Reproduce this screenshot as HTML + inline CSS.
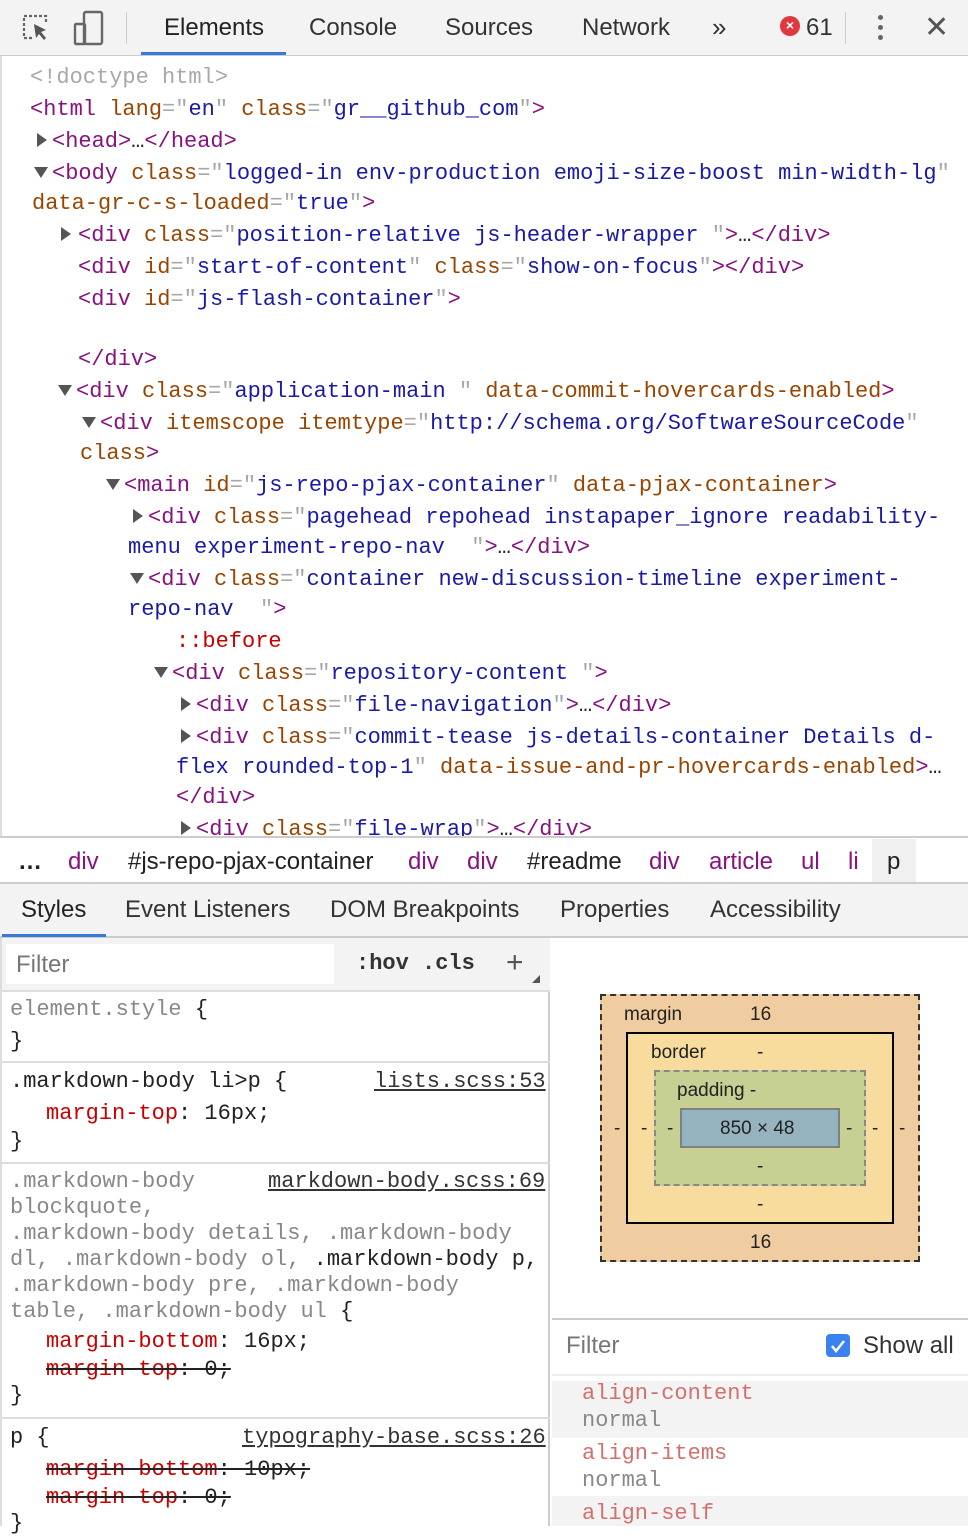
<!DOCTYPE html>
<html><head><meta charset="utf-8"><style>
*{margin:0;padding:0;box-sizing:border-box}
body{width:968px;height:1526px;background:#fff;position:relative;overflow:hidden;font-family:"Liberation Sans",sans-serif}
.m{font-family:"Liberation Mono",monospace;font-size:22px;white-space:pre;position:absolute;line-height:30px}
.t{color:#881280}.a{color:#994500}.v{color:#1a1aa6}.g{color:#a8a8a8}.k{color:#222}
.tri{position:absolute;width:0;height:0}
.r{border-top:7px solid transparent;border-bottom:7px solid transparent;border-left:10px solid #555}
.d{border-left:7px solid transparent;border-right:7px solid transparent;border-top:11px solid #555}
.s{position:absolute;white-space:pre;font-size:24px;color:#333}
.p{color:#c80000}.st{text-decoration:line-through;color:#222}.st .p{color:#c80000}
.gr{color:#888}.u{text-decoration:underline;color:#333}
.bx{font-size:19px!important;color:#222!important}
</style></head><body>
<!-- toolbar -->
<div style="position:absolute;left:0;top:0;width:968px;height:56px;background:#f3f3f3;border-bottom:1px solid #ccc"></div>
<svg style="position:absolute;left:20px;top:12px" width="32" height="32" viewBox="0 0 32 32"><path d="M12 26H4V4h22v8" fill="none" stroke="#666" stroke-width="2.2" stroke-dasharray="3 2"/><path d="M14 12l12 6-5 2 5 6-2 2-5-6-3 4z" fill="#555"/></svg>
<svg style="position:absolute;left:72px;top:10px" width="34" height="36" viewBox="0 0 34 36"><rect x="12" y="2" width="18" height="32" rx="2" fill="none" stroke="#666" stroke-width="2.4"/><rect x="3" y="14" width="10" height="20" rx="1" fill="none" stroke="#666" stroke-width="2.4"/></svg>
<div style="position:absolute;left:126px;top:12px;width:1px;height:32px;background:#ccc"></div>
<div class="s" style="left:164px;top:14px;color:#222">Elements</div>
<div style="position:absolute;left:141px;top:52px;width:145px;height:3px;background:#3879d9"></div>
<div class="s" style="left:309px;top:14px">Console</div>
<div class="s" style="left:445px;top:14px">Sources</div>
<div class="s" style="left:582px;top:14px">Network</div>
<div class="s" style="left:712px;top:12px;font-size:26px">»</div>
<div style="position:absolute;left:780px;top:16px;width:20px;height:20px;border-radius:50%;background:#e0383e;color:#fff;font-size:14px;text-align:center;line-height:19px;font-weight:bold">×</div>
<div class="s" style="left:806px;top:14px">61</div>
<div style="position:absolute;left:845px;top:12px;width:1px;height:32px;background:#ccc"></div>
<div style="position:absolute;left:878px;top:15px;width:5px;height:5px;border-radius:50%;background:#666;box-shadow:0 10px 0 #666,0 20px 0 #666"></div>
<div class="s" style="left:924px;top:10px;font-size:30px;color:#555">✕</div>
<div style="position:absolute;left:0;top:56px;width:2px;height:780px;background:#ddd"></div>

<!-- DOM tree -->
<div class="m g" style="left:30px;top:63px">&lt;!doctype html&gt;</div>
<div class="m" style="left:30px;top:95px"><span class="t">&lt;html</span> <span class="a">lang</span><span class="g">="</span><span class="v">en</span><span class="g">"</span> <span class="a">class</span><span class="g">="</span><span class="v">gr__github_com</span><span class="g">"</span><span class="t">&gt;</span></div>
<div class="tri r" style="left:37px;top:133px"></div>
<div class="m" style="left:52px;top:127px"><span class="t">&lt;head&gt;</span><span class="k">…</span><span class="t">&lt;/head&gt;</span></div>
<div class="tri d" style="left:34px;top:167px"></div>
<div class="m" style="left:52px;top:159px"><span class="t">&lt;body</span> <span class="a">class</span><span class="g">="</span><span class="v">logged-in env-production emoji-size-boost min-width-lg</span><span class="g">"</span></div>
<div class="m" style="left:32px;top:189px"><span class="a">data-gr-c-s-loaded</span><span class="g">="</span><span class="v">true</span><span class="g">"</span><span class="t">&gt;</span></div>
<div class="tri r" style="left:61px;top:227px"></div>
<div class="m" style="left:78px;top:221px"><span class="t">&lt;div</span> <span class="a">class</span><span class="g">="</span><span class="v">position-relative js-header-wrapper </span><span class="g">"</span><span class="t">&gt;</span><span class="k">…</span><span class="t">&lt;/div&gt;</span></div>
<div class="m" style="left:78px;top:253px"><span class="t">&lt;div</span> <span class="a">id</span><span class="g">="</span><span class="v">start-of-content</span><span class="g">"</span> <span class="a">class</span><span class="g">="</span><span class="v">show-on-focus</span><span class="g">"</span><span class="t">&gt;&lt;/div&gt;</span></div>
<div class="m" style="left:78px;top:285px"><span class="t">&lt;div</span> <span class="a">id</span><span class="g">="</span><span class="v">js-flash-container</span><span class="g">"</span><span class="t">&gt;</span></div>
<div class="m" style="left:78px;top:345px"><span class="t">&lt;/div&gt;</span></div>
<div class="tri d" style="left:58px;top:385px"></div>
<div class="m" style="left:76px;top:377px"><span class="t">&lt;div</span> <span class="a">class</span><span class="g">="</span><span class="v">application-main </span><span class="g">"</span> <span class="a">data-commit-hovercards-enabled</span><span class="t">&gt;</span></div>
<div class="tri d" style="left:82px;top:417px"></div>
<div class="m" style="left:100px;top:409px"><span class="t">&lt;div</span> <span class="a">itemscope</span> <span class="a">itemtype</span><span class="g">="</span><span class="v">http://schema.org/SoftwareSourceCode</span><span class="g">"</span></div>
<div class="m" style="left:80px;top:439px"><span class="a">class</span><span class="t">&gt;</span></div>
<div class="tri d" style="left:106px;top:479px"></div>
<div class="m" style="left:124px;top:471px"><span class="t">&lt;main</span> <span class="a">id</span><span class="g">="</span><span class="v">js-repo-pjax-container</span><span class="g">"</span> <span class="a">data-pjax-container</span><span class="t">&gt;</span></div>
<div class="tri r" style="left:133px;top:509px"></div>
<div class="m" style="left:148px;top:503px"><span class="t">&lt;div</span> <span class="a">class</span><span class="g">="</span><span class="v">pagehead repohead instapaper_ignore readability-</span></div>
<div class="m" style="left:128px;top:533px"><span class="v">menu experiment-repo-nav  </span><span class="g">"</span><span class="t">&gt;</span><span class="k">…</span><span class="t">&lt;/div&gt;</span></div>
<div class="tri d" style="left:130px;top:573px"></div>
<div class="m" style="left:148px;top:565px"><span class="t">&lt;div</span> <span class="a">class</span><span class="g">="</span><span class="v">container new-discussion-timeline experiment-</span></div>
<div class="m" style="left:128px;top:595px"><span class="v">repo-nav  </span><span class="g">"</span><span class="t">&gt;</span></div>
<div class="m" style="left:176px;top:627px;color:#c80000">::before</div>
<div class="tri d" style="left:154px;top:667px"></div>
<div class="m" style="left:172px;top:659px"><span class="t">&lt;div</span> <span class="a">class</span><span class="g">="</span><span class="v">repository-content </span><span class="g">"</span><span class="t">&gt;</span></div>
<div class="tri r" style="left:181px;top:697px"></div>
<div class="m" style="left:196px;top:691px"><span class="t">&lt;div</span> <span class="a">class</span><span class="g">="</span><span class="v">file-navigation</span><span class="g">"</span><span class="t">&gt;</span><span class="k">…</span><span class="t">&lt;/div&gt;</span></div>
<div class="tri r" style="left:181px;top:729px"></div>
<div class="m" style="left:196px;top:723px"><span class="t">&lt;div</span> <span class="a">class</span><span class="g">="</span><span class="v">commit-tease js-details-container Details d-</span></div>
<div class="m" style="left:176px;top:753px"><span class="v">flex rounded-top-1</span><span class="g">"</span> <span class="a">data-issue-and-pr-hovercards-enabled</span><span class="t">&gt;</span><span class="k">…</span></div>
<div class="m" style="left:176px;top:783px"><span class="t">&lt;/div&gt;</span></div>
<div class="tri r" style="left:181px;top:821px"></div>
<div class="m" style="left:196px;top:815px"><span class="t">&lt;div</span> <span class="a">class</span><span class="g">="</span><span class="v">file-wrap</span><span class="g">"</span><span class="t">&gt;</span><span class="k">…</span><span class="t">&lt;/div&gt;</span></div>

<!-- breadcrumb -->
<div style="position:absolute;left:0;top:836px;width:968px;height:48px;background:#fff;border-top:2px solid #ccc;border-bottom:2px solid #ccc"></div>
<div style="position:absolute;left:872px;top:839px;width:44px;height:43px;background:#f0f0f0"></div>
<div class="s" style="left:18px;top:848px;color:#222;font-weight:bold">…</div>
<div class="s" style="left:68px;top:848px;color:#881280">div</div>
<div class="s" style="left:128px;top:848px;color:#222">#js-repo-pjax-container</div>
<div class="s" style="left:408px;top:848px;color:#881280">div</div>
<div class="s" style="left:467px;top:848px;color:#881280">div</div>
<div class="s" style="left:527px;top:848px;color:#222">#readme</div>
<div class="s" style="left:649px;top:848px;color:#881280">div</div>
<div class="s" style="left:709px;top:848px;color:#881280">article</div>
<div class="s" style="left:801px;top:848px;color:#881280">ul</div>
<div class="s" style="left:848px;top:848px;color:#881280">li</div>
<div class="s" style="left:887px;top:848px;color:#222">p</div>

<!-- tabs -->
<div style="position:absolute;left:0;top:884px;width:968px;height:54px;background:#f3f3f3;border-bottom:2px solid #ccc"></div>
<div class="s" style="left:21px;top:896px;color:#222">Styles</div>
<div style="position:absolute;left:2px;top:934px;width:104px;height:3px;background:#3879d9"></div>
<div class="s" style="left:125px;top:896px">Event Listeners</div>
<div class="s" style="left:330px;top:896px">DOM Breakpoints</div>
<div class="s" style="left:560px;top:896px">Properties</div>
<div class="s" style="left:710px;top:896px">Accessibility</div>

<!-- left styles pane -->
<div style="position:absolute;left:0;top:938px;width:550px;height:588px;border-left:2px solid #ddd;border-right:2px solid #ccc"></div>
<div style="position:absolute;left:2px;top:938px;width:548px;height:54px;background:#f3f3f3;border-bottom:2px solid #ddd"></div>
<div style="position:absolute;left:6px;top:944px;width:328px;height:40px;background:#fff"></div>
<div class="s" style="left:16px;top:951px;color:#777">Filter</div>
<div class="m" style="left:356px;top:949px;color:#333;font-weight:bold">:hov .cls</div>
<div class="s" style="left:506px;top:946px;font-size:30px;color:#555">+</div>
<div class="tri" style="left:532px;top:975px;border-left:8px solid transparent;border-bottom:8px solid #555"></div>

<div class="m gr" style="left:10px;top:995px">element.style <span class="k">{</span></div>
<div class="m k" style="left:10px;top:1027px">}</div>
<div style="position:absolute;left:2px;top:1061px;width:548px;height:2px;background:#ddd"></div>
<div class="m k" style="left:10px;top:1067px">.markdown-body li&gt;p {</div>
<div class="m u" style="left:374px;top:1067px">lists.scss:53</div>
<div class="m" style="left:46px;top:1099px"><span class="p">margin-top</span><span class="k">: 16px;</span></div>
<div class="m k" style="left:10px;top:1127px">}</div>
<div style="position:absolute;left:2px;top:1162px;width:548px;height:2px;background:#ddd"></div>
<div class="m gr" style="left:10px;top:1167px">.markdown-body</div>
<div class="m u" style="left:268px;top:1167px">markdown-body.scss:69</div>
<div class="m gr" style="left:10px;top:1193px">blockquote,</div>
<div class="m gr" style="left:10px;top:1219px">.markdown-body details, .markdown-body</div>
<div class="m gr" style="left:10px;top:1245px">dl, .markdown-body ol, <span class="k">.markdown-body p,</span></div>
<div class="m gr" style="left:10px;top:1271px">.markdown-body pre, .markdown-body</div>
<div class="m gr" style="left:10px;top:1297px">table, .markdown-body ul <span class="k">{</span></div>
<div class="m" style="left:46px;top:1327px"><span class="p">margin-bottom</span><span class="k">: 16px;</span></div>
<div class="m st" style="left:46px;top:1355px"><span class="p">margin-top</span>: 0;</div>
<div class="m k" style="left:10px;top:1381px">}</div>
<div style="position:absolute;left:2px;top:1417px;width:548px;height:2px;background:#ddd"></div>
<div class="m k" style="left:10px;top:1423px">p {</div>
<div class="m u" style="left:242px;top:1423px">typography-base.scss:26</div>
<div class="m st" style="left:46px;top:1455px"><span class="p">margin-bottom</span>: 10px;</div>
<div class="m st" style="left:46px;top:1483px"><span class="p">margin-top</span>: 0;</div>
<div class="m k" style="left:10px;top:1509px">}</div>

<!-- box model -->
<div style="position:absolute;left:600px;top:994px;width:320px;height:268px;background:#f0cda0;border:2px dashed #333"></div>
<div class="s bx" style="left:624px;top:1004px">margin</div>
<div class="s bx" style="left:750px;top:1004px">16</div>
<div class="s bx" style="left:750px;top:1232px">16</div>
<div class="s bx" style="left:614px;top:1118px">-</div>
<div class="s bx" style="left:899px;top:1118px">-</div>
<div style="position:absolute;left:626px;top:1032px;width:268px;height:192px;background:#f7dc9e;border:2px solid #000"></div>
<div class="s bx" style="left:651px;top:1042px">border</div>
<div class="s bx" style="left:757px;top:1042px">-</div>
<div class="s bx" style="left:757px;top:1194px">-</div>
<div class="s bx" style="left:641px;top:1118px">-</div>
<div class="s bx" style="left:872px;top:1118px">-</div>
<div style="position:absolute;left:654px;top:1070px;width:212px;height:116px;background:#c5d092;border:2px dashed #888"></div>
<div class="s bx" style="left:677px;top:1080px">padding -</div>
<div class="s bx" style="left:757px;top:1156px">-</div>
<div class="s bx" style="left:667px;top:1118px">-</div>
<div class="s bx" style="left:846px;top:1118px">-</div>
<div style="position:absolute;left:680px;top:1108px;width:160px;height:40px;background:#96b4c0;border:2px solid #808080"></div>
<div class="s bx" style="left:720px;top:1118px">850 × 48</div>

<!-- computed -->
<div style="position:absolute;left:552px;top:1318px;width:416px;height:2px;background:#ccc"></div>
<div class="s" style="left:566px;top:1332px;color:#777">Filter</div>
<div style="position:absolute;left:826px;top:1334px;width:24px;height:23px;border-radius:4px;background:#3b82f0"></div>
<svg style="position:absolute;left:826px;top:1334px" width="24" height="23"><path d="M6 12l4 5 8-10" fill="none" stroke="#fff" stroke-width="2.5"/></svg>
<div class="s" style="left:863px;top:1332px;color:#333">Show all</div>
<div style="position:absolute;left:552px;top:1374px;width:416px;height:2px;background:#eee"></div>
<div style="position:absolute;left:552px;top:1381px;width:416px;height:57px;background:#f3f3f3"></div>
<div style="position:absolute;left:552px;top:1496px;width:416px;height:30px;background:#f3f3f3"></div>
<div class="m" style="left:582px;top:1379px;color:#d46f6f">align-content</div>
<div class="m" style="left:582px;top:1406px;color:#888">normal</div>
<div class="m" style="left:582px;top:1439px;color:#d46f6f">align-items</div>
<div class="m" style="left:582px;top:1466px;color:#888">normal</div>
<div class="m" style="left:582px;top:1499px;color:#d46f6f">align-self</div>
</body></html>
